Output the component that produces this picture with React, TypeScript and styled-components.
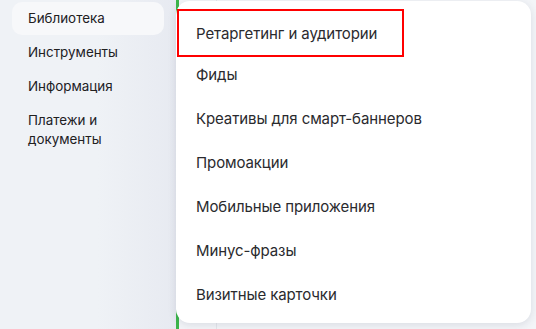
import React from 'react';
import styled, { createGlobalStyle } from 'styled-components';

const GlobalStyle = createGlobalStyle`
  html, body {
    margin: 0;
    padding: 0;
    background: #f3f5f8;
  }
  body {
    font-family: Inter, "Noto Sans", Arial, sans-serif;
    color: #21201f;
  }
`;

const Page = styled.div`
  position: relative;
  display: flex;
  width: 536px;
  height: 329px;
  overflow: hidden;
`;

const Sidebar = styled.nav`
  width: 176px;
  flex-shrink: 0;
  background: linear-gradient(to right, #eff2f6 0%, #eff2f6 55%, #e7eaf1 100%);
  padding: 2px 12px 0 12px;
  box-sizing: border-box;
  display: flex;
  flex-direction: column;
  gap: 1px;
`;

const NavItem = styled.div<{ active?: boolean }>`
  padding: 7px 16px;
  border-radius: 10px;
  font-size: 13.4px;
  line-height: 19px;
  width: 152px;
  box-sizing: border-box;
  background: ${({ active }) => (active ? '#f7f8fa' : 'transparent')};
  color: #21201f;
`;

const Content = styled.main`
  flex: 1;
  border-left: 3px solid #3cb64a;
  background: #f3f5f8;
  display: flex;
`;

const Column = styled.div`
  width: 37px;
  border-right: 1px solid #e3e6eb;
`;

const Popover = styled.div`
  position: absolute;
  left: 176px;
  top: 1px;
  width: 355px;
  height: 322px;
  background: #ffffff;
  border-radius: 14px;
  box-shadow: 0 2px 8px rgba(30, 40, 70, 0.12);
  padding-top: 7px;
  box-sizing: border-box;
  display: flex;
  flex-direction: column;
`;

const MenuItem = styled.div<{ highlighted?: boolean }>`
  height: 44px;
  display: flex;
  align-items: center;
  padding-left: 20px;
  font-size: 15px;
  letter-spacing: -0.1px;
  color: #2a2a2e;
  box-sizing: border-box;
  ${({ highlighted }) =>
    highlighted &&
    `
    width: 227px;
    margin-left: 1px;
    padding-left: 17px;
    height: 48px;
    margin-top: 1px;
    margin-bottom: -5px;
    border: 2px solid #ff0000;
  `}
`;

const items = [
  'Ретаргетинг и аудитории',
  'Фиды',
  'Креативы для смарт-баннеров',
  'Промоакции',
  'Мобильные приложения',
  'Минус-фразы',
  'Визитные карточки',
];

export default function App() {
  return (
    <>
      <GlobalStyle />
      <Page>
        <Sidebar>
          <NavItem active>Библиотека</NavItem>
          <NavItem>Инструменты</NavItem>
          <NavItem>Информация</NavItem>
          <NavItem>
            Платежи и
            <br />
            документы
          </NavItem>
        </Sidebar>
        <Content>
          <Column />
        </Content>
        <Popover>
          {items.map((item, i) => (
            <MenuItem key={item} highlighted={i === 0}>
              {item}
            </MenuItem>
          ))}
        </Popover>
      </Page>
    </>
  );
}
